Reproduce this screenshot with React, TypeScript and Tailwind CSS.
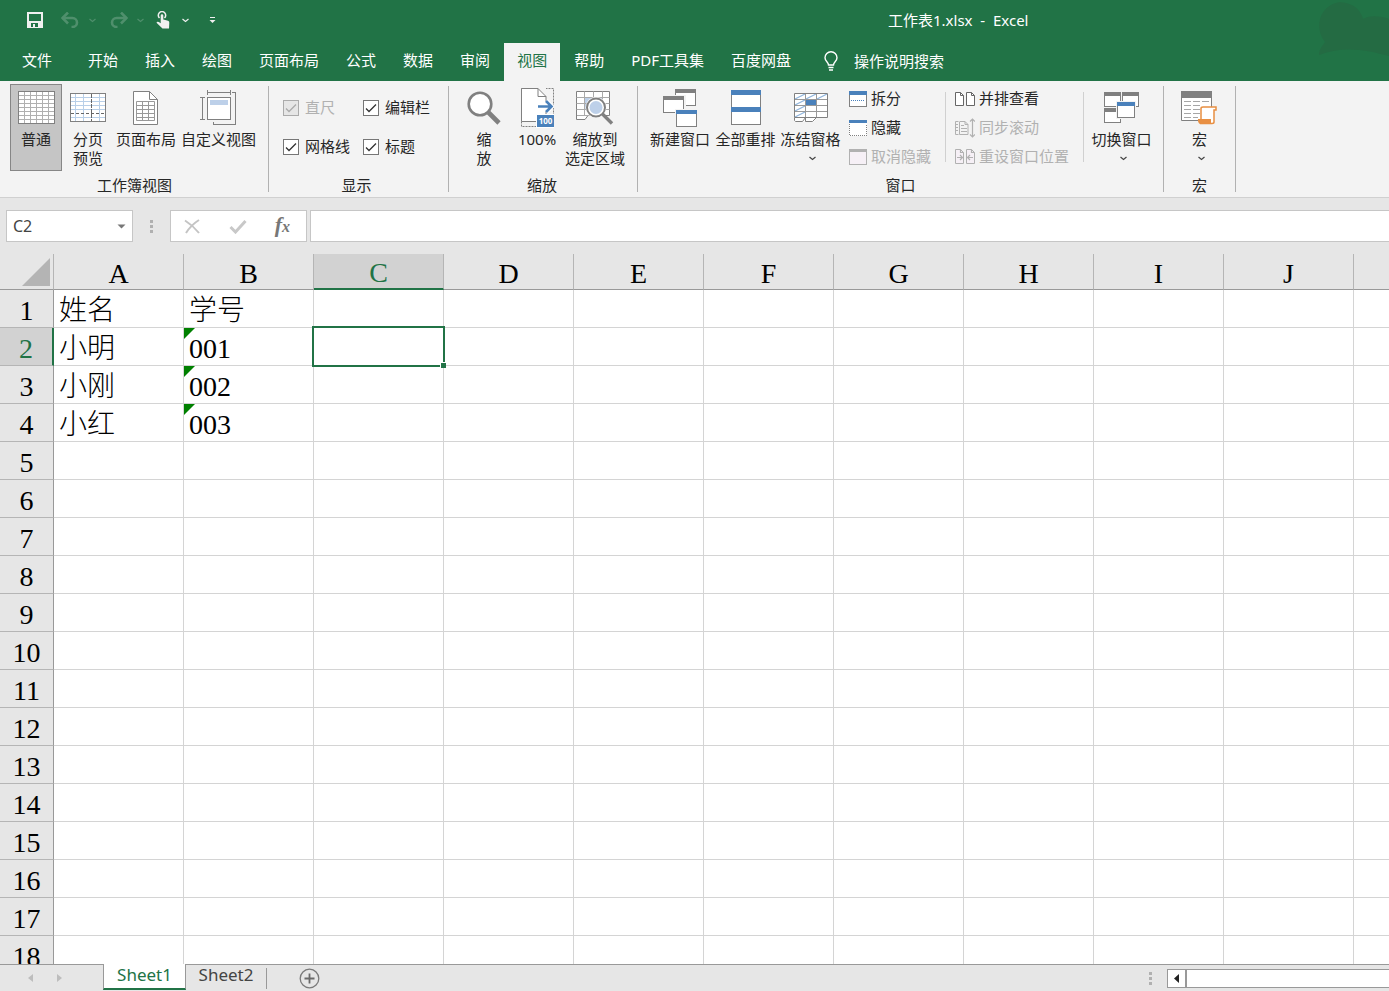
import React, { type ReactNode } from "react";

const ui = "font-['Noto_Sans','Noto_Sans_CJK_SC',sans-serif]";
const G = "#808080";
const B = "#4a81bb";

type P = { children?: ReactNode };

function Svg({ w, h, crisp = true, children }: { w: number; h: number; crisp?: boolean } & P) {
  return (
    <svg
      width={w}
      height={h}
      viewBox={`0 0 ${w} ${h}`}
      fill="none"
      shapeRendering={crisp ? "crispEdges" : "auto"}
      className="shrink-0"
      aria-hidden="true"
    >
      {children}
    </svg>
  );
}

function Chevron({ color = "#444" }: { color?: string }) {
  return (
    <Svg w={7} h={5} crisp={false}>
      <path d="M.5 1l3 2.5 3-2.5" stroke={color} strokeWidth="1.2" />
    </Svg>
  );
}

function Win({ x, y, w, h, c = G, bar = 4 }: { x: number; y: number; w: number; h: number; c?: string; bar?: number }) {
  return (
    <>
      <rect x={x + 0.5} y={y + 0.5} width={w - 1} height={h - 1} fill="#fff" stroke={G} />
      <rect x={x} y={y} width={w} height={bar} fill={c} />
    </>
  );
}

const NormalIcon = () => (
  <Svg w={37} h={33}>
    <rect x=".5" y=".5" width="36" height="32" fill="#fff" stroke={G} />
    <path
      d="M6.5 1v31M12.5 1v31M18.5 1v31M24.5 1v31M30.5 1v31M1 4.5h35M1 8.5h35M1 12.5h35M1 16.5h35M1 20.5h35M1 24.5h35M1 28.5h35"
      stroke="#b0b0b0"
    />
  </Svg>
);
const BreakIcon = () => (
  <Svg w={36} h={29}>
    <rect x=".5" y=".5" width="35" height="28" fill="#fff" stroke={G} />
    <path d="M1 4.5h34M1 8.5h34M1 12.5h34M1 16.5h34M1 24.5h34M5.5 1v27M13.5 1v27M29.5 1v27" stroke="#b8cfe8" />
    <path d="M21.5 1v27" stroke="#666" strokeDasharray="4 1" />
    <path d="M1 20.5h34" stroke="#666" strokeDasharray="3 2" />
  </Svg>
);
const PageIcon = () => (
  <Svg w={26} h={34} crisp={false}>
    <path d="M.5 .5h16l8 8v25H.5z" fill="#fff" stroke={G} />
    <path d="M16.5 .5v8h8" stroke={G} />
    <path
      d="M3.5 10.5h18v19h-18zM9.5 10.5v19M15.5 10.5v19M3.5 14.5h18M3.5 18.5h18M3.5 22.5h18M3.5 26.5h18"
      stroke="#999"
    />
  </Svg>
);
const CustomIcon = () => (
  <Svg w={37} h={36}>
    <path d="M7.5 0v5M30.5 0v5M8 2.5h22M0 7.5h5M0 29.5h5M2.5 8v22M32 2.5h3.5v32h-22v-3" stroke={G} />
    <rect x="7.5" y="7.5" width="23" height="22" fill="#fff" stroke={G} />
    <rect x="10" y="10" width="18" height="5" fill="#bdd0e9" />
  </Svg>
);
const ZoomIcon = () => (
  <Svg w={36} h={36} crisp={false}>
    <circle cx="14" cy="14" r="11.3" fill="#fff" stroke={G} strokeWidth="2.6" />
    <path d="M22.5 22.5L33 33" stroke={G} strokeWidth="4.6" />
  </Svg>
);
const HundredIcon = () => (
  <Svg w={33} h={40} crisp={false}>
    <path d="M.5 .5h32v38H.5z" stroke={G} strokeDasharray="2 1" />
    <path d="M17 0h8v8h-8z" fill="#f3f3f3" />
    <path d="M.5 .5h16.5l8 8v25H.5z" fill="#fff" stroke={G} />
    <path d="M17 .5v8h8" stroke={G} />
    <path d="M17 18.5h13M25 13l5.5 5.5L25 24" stroke="#fff" strokeWidth="5" />
    <path d="M17 18.5h13M25 13l5.5 5.5L25 24" stroke={B} strokeWidth="2.6" />
    <path d="M15 26h18v14H15z" fill="#fff" />
    <path d="M16 27h17v12H16z" fill={B} />
    <text x="24.5" y="36" textAnchor="middle" fontSize="8" fontWeight="700" fill="#fff">
      100
    </text>
  </Svg>
);
const ZoomSelIcon = () => (
  <Svg w={38} h={34} crisp={false}>
    <path d="M.5 .5h33v24H12l-3 4H.5z" fill="#fff" stroke={G} />
    <path d="M8 7h18v12H8z" fill="#bdd0e9" />
    <path d="M.5 6.5h33M.5 12.5h33M.5 18.5h33M8.5 .5v24M17.5 .5v6M26.5 .5v24M1 24.5h12" stroke="#aaa" />
    <circle cx="20" cy="16.5" r="10.5" fill="#fff" />
    <circle cx="20" cy="16.5" r="9" fill="#fff" stroke={G} strokeWidth="2" />
    <circle cx="20" cy="16.5" r="6.5" fill="#bdd0e9" />
    <path d="M26.5 23L36 32.5" stroke={G} strokeWidth="3.4" />
  </Svg>
);
const NewWinIcon = () => (
  <Svg w={35} h={38}>
    <Win x={12} y={0} w={21} h={17} />
    <rect x="0" y="6" width="23" height="18" fill="#f3f3f3" />
    <Win x={0} y={7} w={21} h={17} />
    <rect x="12" y="20" width="23" height="18" fill="#f3f3f3" />
    <Win x={13} y={21} w={21} h={17} c={B} />
  </Svg>
);
const ArrangeIcon = () => (
  <Svg w={30} h={35}>
    <Win x={0} y={0} w={30} h={18} c={B} bar={5} />
    <Win x={0} y={17} w={30} h={18} c={B} bar={5} />
  </Svg>
);
const FreezeIcon = () => (
  <Svg w={34} h={30} crisp={false}>
    <path d="M.5 .5h33v24H23l-3 4H1.5l-1-4z" fill="#fff" />
    <path d="M1 6l10-5M12 6l10-5M23 6l10-5M1 12l10-5M1 18l10-5M1 24l10-5" stroke="#8fb4dc" strokeWidth="1.3" />
    <path d="M.5 6.5h33M.5 12.5h33M.5 18.5h33M11.5 .5v24M22.5 .5v24" stroke="#999" />
    <path d="M12 7h10v5H12z" fill={B} />
    <path d="M.5 .5h33v24H.5zM.5 24.5v3l1 1h7l3-4v4h7l4-4" stroke={G} />
  </Svg>
);
const SwitchIcon = () => (
  <Svg w={35} h={31}>
    <Win x={0} y={0} w={17} h={15} />
    <Win x={18} y={0} w={17} h={15} />
    <Win x={0} y={16} w={17} h={15} />
    <rect x="12" y="9" width="20" height="18" fill="#f3f3f3" />
    <Win x={13} y={10} w={18} h={16} c={B} />
  </Svg>
);
const MacroIcon = () => (
  <Svg w={37} h={34} crisp={false}>
    <path d="M.5 .5h30v29H.5z" fill="#fff" stroke={G} />
    <path d="M0 0h31v7H0z" fill={G} />
    <path
      d="M3 10.5h7M12 10.5h7M21 10.5h7M3 14.5h7M12 14.5h7M3 18.5h7M12 18.5h7M3 22.5h7M12 22.5h7M3 26.5h7M12 26.5h5"
      stroke="#a6a6a6"
    />
    <path d="M20 29V17.500q0-1.500 2-1.500h13v3h-2V31q0 1.500-2 1.500H19" fill="#fff" stroke="#e88f42" strokeWidth="1.5" />
    <path d="M17 28h13v5H19q-2.500-1.500-2-5z" fill="#e88f42" />
  </Svg>
);

const SplitIcon = () => (
  <Svg w={18} h={16}>
    <Win x={0} y={0} w={18} h={16} c={B} />
    <path d="M2 9.5h14" stroke={B} strokeDasharray="1 1" />
  </Svg>
);
const HideIcon = () => (
  <Svg w={18} h={16}>
    <path d="M0 0h18v16H0z" fill="#fff" />
    <path d="M.5 4v11.5h17V4" stroke={G} strokeDasharray="1 1" />
    <path d="M0 0h18v3H0z" fill={B} />
  </Svg>
);
const UnhideIcon = () => (
  <Svg w={18} h={16}>
    <rect x=".5" y=".5" width="17" height="15" fill="#f6f0f6" stroke="#b1b1b1" />
    <path d="M0 0h18v3H0z" fill="#b1b1b1" />
  </Svg>
);
const SideIcon = () => (
  <Svg w={20} h={16} crisp={false}>
    <path d="M.5 1.5h5l3 3v10h-8zM11.5 1.5h5l3 3v10h-8z" fill="#fff" stroke="#666" />
    <path d="M5.5 1.5v3h3M16.5 1.5v3h3" stroke="#666" />
  </Svg>
);
const SyncIcon = () => (
  <Svg w={20} h={20} crisp={false}>
    <path d="M3.5 3.5H.5v13h3M5 3.5h5l3 3v10H4.5v-13M10 3.5v3h3M1 6.5h2M1 9.5h2M1 12.5h2M6 7.5h3M6 10.5h6M6 13.5h6" stroke="#b1b1b1" />
    <path d="M17.5 1v18M15 3.5L17.5 1 20 3.5M15 16.5l2.5 2.5 2.5-2.5" stroke="#b1b1b1" strokeWidth="1.2" />
  </Svg>
);
const ResetIcon = () => (
  <Svg w={20} h={16} crisp={false}>
    <path d="M.5 .5h5l3 3v11h-8zM11.5 .5h5l3 3v11h-8z" fill="#f6f0f6" stroke="#b1b1b1" />
    <path d="M5.5 .5v3h3M16.5 .5v3h3M2 8.5h5M5 6l2.5 2.5L5 11M18 8.5h-5M15 6l-2.5 2.5L15 11" stroke="#b1b1b1" strokeWidth="1.2" />
  </Svg>
);

function BigButton({
  icon,
  lines,
  width,
  active,
  menu,
}: {
  icon: ReactNode;
  lines: string[];
  width: string;
  active?: boolean;
  menu?: boolean;
}) {
  return (
    <button
      type="button"
      aria-pressed={active}
      className={`flex h-[87px] shrink-0 flex-col items-center border whitespace-nowrap ${width} ${
        active ? "border-[#868686] bg-[#c5c5c5]" : "border-transparent"
      }`}
    >
      <span className="flex h-[45px] shrink-0 items-center justify-center">{icon}</span>
      {lines.map((l) => (
        <span key={l} className="leading-[19px]">
          {l}
        </span>
      ))}
      {menu && (
        <span className="flex h-[19px] items-center pl-1">
          <Chevron />
        </span>
      )}
    </button>
  );
}

function SmallButton({ icon, text, disabled }: { icon: ReactNode; text: string; disabled?: boolean }) {
  return (
    <button
      type="button"
      disabled={disabled}
      className={`flex h-[29px] items-center gap-1 whitespace-nowrap ${disabled ? "text-[#b1b1b1]" : ""}`}
    >
      {icon}
      {text}
    </button>
  );
}

function Group({ label, className, children }: { label: string; className: string } & P) {
  return (
    <section className={`flex shrink-0 flex-col pt-[3px] ${className}`} aria-label={label}>
      <div className="flex h-[91px]">{children}</div>
      <div className="text-center leading-5">{label}</div>
    </section>
  );
}

const Sep = () => <div className="mt-[5px] h-[106px] w-px shrink-0 bg-[#b1b1b1]" />;
const InnerSep = ({ className }: { className: string }) => (
  <div className={`mt-2 h-[70px] w-px shrink-0 bg-[#d0d0d0] ${className}`} />
);

function Check({ id, label, disabled }: { id: string; label: string; disabled?: boolean }) {
  return (
    <div className="flex h-[39px] items-center gap-[6px] whitespace-nowrap">
      <span className="grid size-4 shrink-0">
        <input
          id={id}
          type="checkbox"
          defaultChecked
          disabled={disabled}
          className="peer col-start-1 row-start-1 size-4 appearance-none border border-[#767676] bg-white disabled:border-[#ababab] disabled:bg-[#e6e6e6]"
        />
        <svg
          viewBox="0 0 16 16"
          className="pointer-events-none col-start-1 row-start-1 hidden size-4 peer-checked:block"
          fill="none"
          stroke={disabled ? "#ababab" : "#333"}
          strokeWidth="1.3"
        >
          <path d="M3 8.5l3 3L13 4.5" />
        </svg>
      </span>
      <label htmlFor={id} className={disabled ? "text-[#b1b1b1]" : ""}>
        {label}
      </label>
    </div>
  );
}

const TABS = ["文件", "开始", "插入", "绘图", "页面布局", "公式", "数据", "审阅", "视图", "帮助", "PDF工具集", "百度网盘"];

function TitleBar() {
  return (
    <header className="relative h-[81px] shrink-0 overflow-hidden bg-[#217346] text-white">
      <svg className="absolute top-0 right-0" width="120" height="81" viewBox="0 0 120 81" aria-hidden="true">
        <path
          d="M50 55c0-6 4-10 6-13-7-9-8-22-1-31C62 3 70 1 77 3c9 2 15 8 17 16 8-4 17-3 26 0v37c-20-5-44-11-70-1z"
          fill="#246b43"
        />
      </svg>
      <div className="relative flex h-10 items-center">
        <div className="flex w-[888px] shrink-0 items-center pl-[27px]">
          <button type="button" aria-label="保存">
            <Svg w={16} h={16}>
              <path d="M0 0h16v16H0zM2 2v7h12V2zM4 11v4h2v-3h2v3h3v-4z" fill="#f0f0f0" fillRule="evenodd" />
            </Svg>
          </button>
          <button type="button" aria-label="撤消" className="ml-[18px]">
            <Svg w={19} h={16} crisp={false}>
              <path d="M1 6h10.5a4.5 4.5 0 0 1 0 9H10.5" stroke="#4f8f6c" strokeWidth="2.6" />
              <path d="M7 .5L1.5 6 7 11.5" stroke="#4f8f6c" strokeWidth="2.6" />
            </Svg>
          </button>
          <button type="button" aria-label="撤消选项" className="ml-[9px]">
            <Chevron color="#4f8f6c" />
          </button>
          <button type="button" aria-label="恢复" className="ml-[13px]">
            <Svg w={19} h={16} crisp={false}>
              <path d="M18 6H7.5a4.5 4.5 0 0 0 0 9H8.5" stroke="#4f8f6c" strokeWidth="2.6" />
              <path d="M12 .5L17.5 6 12 11.5" stroke="#4f8f6c" strokeWidth="2.6" />
            </Svg>
          </button>
          <button type="button" aria-label="恢复选项" className="ml-[9px]">
            <Chevron color="#4f8f6c" />
          </button>
          <button type="button" aria-label="触摸/鼠标模式" className="ml-3">
            <Svg w={14} h={18} crisp={false}>
              <path d="M3.5 7A3.7 3.7 0 1 1 8.5 7" stroke="#f0f0f0" strokeWidth="1.5" />
              <path
                d="M4.700 4.500a1.300 1.300 0 0 1 2.600 0V8.500l4.700 1.300q1.500 .5 1.300 2L13 17.500H6.500L.5 11.800q.5-1.800 2.300-.8l1.900 1.200z"
                fill="#f0f0f0"
              />
            </Svg>
          </button>
          <button type="button" aria-label="触摸选项" className="ml-3">
            <Chevron color="#f0f0f0" />
          </button>
          <button type="button" aria-label="自定义快速访问工具栏" className="ml-5">
            <Svg w={7} h={8} crisp={false}>
              <path d="M1 1.5h5" stroke="#f0f0f0" />
              <path d="M.5 4h6L3.5 7z" fill="#f0f0f0" />
            </Svg>
          </button>
        </div>
        <h1 className="whitespace-pre">工作表1.xlsx  -  Excel</h1>
      </div>
      <nav className="relative flex h-[41px] items-stretch gap-px pt-[3px] pl-[9px]" role="tablist">
        {TABS.map((t, i) => (
          <button
            key={t}
            type="button"
            role="tab"
            aria-selected={t === "视图"}
            className={`shrink-0 px-[13px] pb-[3px] whitespace-nowrap ${i === 0 ? "mr-[9px]" : ""} ${
              t === "视图" ? "bg-[#f3f3f3] text-[#217346]" : ""
            }`}
          >
            {t}
          </button>
        ))}
        <button type="button" className="ml-[19px] flex shrink-0 items-center gap-4 pb-[2px] whitespace-nowrap">
          <Svg w={14} h={20} crisp={false}>
            <path d="M4.500 14c0-3-3.500-3.500-3.500-7.200a6 6 0 0 1 12 0c0 3.700-3.500 4.200-3.500 7.200z" stroke="#fff" strokeWidth="1.400" />
            <path d="M4.500 16.500h5M5 19h4" stroke="#fff" strokeWidth="1.300" />
          </Svg>
          操作说明搜索
        </button>
      </nav>
    </header>
  );
}

function Ribbon() {
  return (
    <div className="flex h-[117px] shrink-0 overflow-hidden border-b border-[#d0d0d0] bg-[#f3f3f3]">
      <Group label="工作簿视图" className="pr-[9px] pl-[10px]">
        <BigButton icon={<NormalIcon />} lines={["普通"]} width="w-[52px]" active />
        <BigButton icon={<BreakIcon />} lines={["分页", "预览"]} width="w-[52px]" />
        <BigButton icon={<PageIcon />} lines={["页面布局"]} width="w-[64px]" />
        <BigButton icon={<CustomIcon />} lines={["自定义视图"]} width="w-[81px]" />
      </Group>
      <Sep />
      <Group label="显示" className="pr-[18px] pl-[14px]">
        <div className="grid grid-cols-[80px_67px] content-start pt-1">
          <Check id="ruler" label="直尺" disabled />
          <Check id="fbar" label="编辑栏" />
          <Check id="gridlines" label="网格线" />
          <Check id="headings" label="标题" />
        </div>
      </Group>
      <Sep />
      <Group label="缩放" className="pr-[11px] pl-[9px]">
        <BigButton icon={<ZoomIcon />} lines={["缩", "放"]} width="w-[52px]" />
        <BigButton icon={<HundredIcon />} lines={["100%"]} width="w-[54px]" />
        <BigButton icon={<ZoomSelIcon />} lines={["缩放到", "选定区域"]} width="w-[62px]" />
      </Group>
      <Sep />
      <Group label="窗口" className="px-[9px]">
        <BigButton icon={<NewWinIcon />} lines={["新建窗口"]} width="w-[66px]" />
        <BigButton icon={<ArrangeIcon />} lines={["全部重排"]} width="w-[65px]" />
        <BigButton icon={<FreezeIcon />} lines={["冻结窗格"]} width="w-[65px]" menu />
        <div className="ml-[6px]">
          <SmallButton icon={<SplitIcon />} text="拆分" />
          <SmallButton icon={<HideIcon />} text="隐藏" />
          <SmallButton icon={<UnhideIcon />} text="取消隐藏" disabled />
        </div>
        <InnerSep className="mr-[9px] ml-[14px]" />
        <div>
          <SmallButton icon={<SideIcon />} text="并排查看" />
          <SmallButton icon={<SyncIcon />} text="同步滚动" disabled />
          <SmallButton icon={<ResetIcon />} text="重设窗口位置" disabled />
        </div>
        <InnerSep className="mr-[5px] ml-[14px]" />
        <BigButton icon={<SwitchIcon />} lines={["切换窗口"]} width="w-[65px]" menu />
      </Group>
      <Sep />
      <Group label="宏" className="px-[10px]">
        <BigButton icon={<MacroIcon />} lines={["宏"]} width="w-[51px]" menu />
      </Group>
      <Sep />
    </div>
  );
}

function Dots() {
  return (
    <Svg w={3} h={13}>
      <path d="M0 0h3v3H0zM0 5h3v3H0zM0 10h3v3H0z" fill="#b0b0b0" />
    </Svg>
  );
}

function FormulaBar() {
  return (
    <div className="flex h-14 shrink-0 items-start bg-[#e6e6e6] pt-3 pl-[6px]">
      <div className="flex h-8 w-[127px] shrink-0 items-center border border-[#c6c6c6] bg-white pr-[6px]">
        <input
          aria-label="名称框"
          defaultValue="C2"
          className="w-full min-w-0 flex-1 bg-transparent pl-[6px] text-base text-[#444] outline-none"
        />
        <button type="button" aria-label="名称列表">
          <Svg w={9} h={5} crisp={false}>
            <path d="M.5 .5h8l-4 4z" fill="#777" />
          </Svg>
        </button>
      </div>
      <div className="flex h-8 w-[37px] shrink-0 items-center justify-center">
        <Dots />
      </div>
      <div className="flex h-8 w-[137px] shrink-0 items-center justify-between border border-[#c6c6c6] bg-white pr-4 pl-[13px]">
        <button type="button" aria-label="取消">
          <Svg w={17} h={15} crisp={false}>
            <path d="M1 1.5q8 5 14 12.5M15 1Q7 6 2 14" stroke="#c4c4c4" strokeWidth="2" />
          </Svg>
        </button>
        <button type="button" aria-label="输入">
          <Svg w={18} h={15} crisp={false}>
            <path d="M1.5 8l5 5L16.5 2" stroke="#c8c8c8" strokeWidth="3" />
          </Svg>
        </button>
        <button
          type="button"
          aria-label="插入函数"
          className="font-['Liberation_Serif',serif] text-[22px] leading-none font-bold text-[#777] italic"
        >
          f<span className="text-base">x</span>
        </button>
      </div>
      <input aria-label="编辑栏内容" className="ml-[3px] h-8 min-w-0 flex-1 border border-r-0 border-[#c6c6c6] bg-white px-2 text-base outline-none" />
    </div>
  );
}

const COLS = "ABCDEFGHIJ".split("");
const ROWS = Array.from({ length: 18 }, (_, i) => i + 1);
const DATA: Record<string, string> = {
  A1: "姓名",
  B1: "学号",
  A2: "小明",
  B2: "001",
  A3: "小刚",
  B3: "002",
  A4: "小红",
  B4: "003",
};

function Grid() {
  return (
    <div className="min-h-0 flex-1 overflow-hidden bg-white">
      <table className="w-full border-separate border-spacing-0 font-['Liberation_Serif','Noto_Sans_CJK_SC',serif] text-[28px] leading-[30px] text-black">
        <thead>
          <tr className="h-9">
            <td className="w-[54px] min-w-[54px] border-r border-b border-r-[#b5b5b5] border-b-[#999] bg-[#e6e6e6] p-0">
              <div className="flex justify-end pr-[3px]">
                <Svg w={28} h={28} crisp={false}>
                  <path d="M28 0v28H0z" fill="#b4b4b4" />
                </Svg>
              </div>
            </td>
            {COLS.map((c) => (
              <th
                key={c}
                scope="col"
                className={`w-[130px] min-w-[130px] border-r border-r-[#b5b5b5] p-0 pt-1 font-normal ${
                  c === "C"
                    ? "border-b-2 border-b-[#217346] bg-[#d2d2d2] text-[#217346]"
                    : "border-b border-b-[#999] bg-[#e6e6e6]"
                }`}
              >
                {c}
              </th>
            ))}
            <td className="border-b border-b-[#999] bg-[#e6e6e6] p-0" />
          </tr>
        </thead>
        <tbody>
          {ROWS.map((r) => (
            <tr key={r} className="h-[38px]">
              <th
                scope="row"
                className={`border-b border-b-[#b5b5b5] p-0 pt-1 font-normal ${
                  r === 2
                    ? "border-r-2 border-r-[#217346] bg-[#d2d2d2] text-[#217346]"
                    : "border-r border-r-[#999] bg-[#e6e6e6]"
                }`}
              >
                {r}
              </th>
              {COLS.map((c) => {
                const id = c + r;
                return (
                  <td key={c} className="relative border-r border-b border-[#d4d4d4] p-0 pt-1 pl-[5px] font-light">
                    {DATA[id]}
                    {c === "B" && r > 1 && r < 5 && (
                      <svg className="absolute top-0 left-0" width="11" height="11" aria-hidden="true">
                        <path d="M0 0h11L0 11z" fill="#008000" />
                      </svg>
                    )}
                    {id === "C2" && (
                      <div className="absolute -inset-[2px] z-10 border-2 border-[#217346]">
                        <div className="absolute -right-[3px] -bottom-[3px] size-[6px] border-t border-l border-white bg-[#217346]" />
                      </div>
                    )}
                  </td>
                );
              })}
              <td className="border-b border-[#d4d4d4] p-0" />
            </tr>
          ))}
        </tbody>
      </table>
    </div>
  );
}

function SheetBar() {
  return (
    <footer className="flex h-[27px] shrink-0 bg-[#e6e6e6] text-[17px]">
      <div className="flex w-[103px] shrink-0 items-center gap-6 border-t border-[#999] pl-7">
        <button type="button" aria-label="上一张工作表">
          <Svg w={5} h={8} crisp={false}>
            <path d="M5 0v8L0 4z" fill="#bdbdbd" />
          </Svg>
        </button>
        <button type="button" aria-label="下一张工作表">
          <Svg w={5} h={8} crisp={false}>
            <path d="M0 0v8l5-4z" fill="#bdbdbd" />
          </Svg>
        </button>
      </div>
      <button
        type="button"
        className="mb-px w-[83px] shrink-0 border-x border-b-2 border-x-[#999] border-b-[#217346] bg-white pb-[3px] leading-[21px] text-[#217346]"
      >
        Sheet1
      </button>
      <div className="flex min-w-0 flex-1 items-start border-t border-[#999]">
        <button type="button" className="h-5 w-20 shrink-0 leading-5 text-[#444]">
          Sheet2
        </button>
        <div className="mt-[3px] h-[21px] w-px shrink-0 bg-[#999]" />
        <button type="button" aria-label="新工作表" className="mt-[3px] ml-8 shrink-0">
          <Svg w={21} h={21} crisp={false}>
            <circle cx="10.5" cy="10.5" r="9.3" stroke="#7a7a7a" strokeWidth="1.3" />
            <path d="M5.5 10.5h10M10.5 5.5v10" stroke="#6a6a6a" strokeWidth="1.8" />
          </Svg>
        </button>
        <div className="mt-[7px] ml-auto">
          <Dots />
        </div>
        <div className="mt-1 ml-[15px] flex h-[19px] w-[222px] shrink-0 border border-r-0 border-[#999] bg-white">
          <button type="button" aria-label="向左滚动" className="flex w-[19px] items-center justify-center border-r-2 border-[#999]">
            <Svg w={5} h={9} crisp={false}>
              <path d="M5 0v9L0 4.5z" fill="#222" />
            </Svg>
          </button>
        </div>
      </div>
    </footer>
  );
}

export default function App() {
  return (
    <div className={`flex h-screen flex-col overflow-hidden text-[15px] text-[#262626] ${ui}`}>
      <TitleBar />
      <Ribbon />
      <FormulaBar />
      <Grid />
      <SheetBar />
    </div>
  );
}
